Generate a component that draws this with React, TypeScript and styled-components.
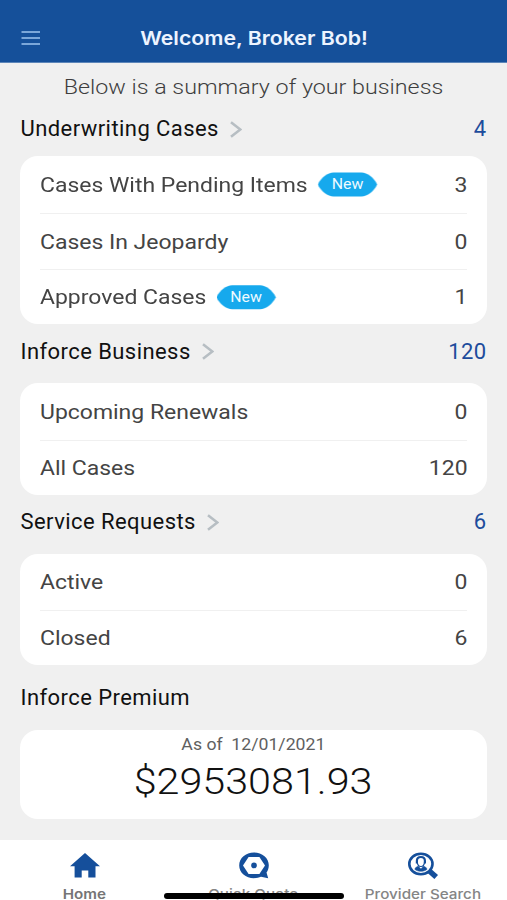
import React from "react";
import styled, { createGlobalStyle } from "styled-components";

const GlobalStyle = createGlobalStyle`
  *, *::before, *::after { box-sizing: border-box; }
  body { margin: 0; background: #f0f0f0; font-family: Roboto, sans-serif; }
`;

const Screen = styled.div`
  display: flex;
  flex-direction: column;
  width: 507px;
  height: 900px;
  overflow: hidden;
  background: #f0f0f0;
`;

const Header = styled.header`
  display: grid;
  grid-template-columns: 70px 1fr 70px;
  align-items: center;
  flex: none;
  height: 63px;
  padding-top: 14px;
  background: #15509a;
  border-bottom: 1px solid #5d86b9;
`;

const MenuButton = styled.button`
  display: flex;
  margin: 0 0 0 21px;
  padding: 0;
  width: 20px;
  border: 0;
  background: none;
`;

const Title = styled.h1`
  margin: 2px 0 0 1px;
  font: 600 19px/24px Inter, sans-serif;
  color: #edf4ff;
  text-align: center;
  white-space: nowrap;
  transform: scaleX(1.12);
`;

const Subtitle = styled.p`
  flex: none;
  height: 35px;
  margin: 0;
  padding-top: 13px;
  font-size: 20.5px;
  font-weight: 300;
  line-height: 22px;
  text-align: center;
  color: #3e3e3e;
  transform: scaleX(1.135);
`;

const SectionHead = styled.div<{ $height: number; $top?: number; $bottom?: number }>`
  display: flex;
  align-items: center;
  flex: none;
  height: ${(p) => p.$height}px;
  margin: 0 20.5px;
  padding-top: ${(p) => p.$top ?? 0}px;
  padding-bottom: ${(p) => p.$bottom ?? 0}px;
`;

const SectionTitle = styled.h2`
  margin: 0 11px 0 0;
  font-size: 22px;
  font-weight: 450;
  line-height: 26px;
  letter-spacing: 0.43px;
  color: #111;
`;

const SectionCount = styled.span`
  margin-left: auto;
  font-size: 22px;
  font-weight: 450;
  line-height: 26px;
  letter-spacing: 0.4px;
  color: #1d4c9c;
`;

const Card = styled.section`
  flex: none;
  margin: 0 20px;
  padding: 0 20px;
  border-radius: 18px;
  background: #fff;
`;

const Row = styled.div`
  display: flex;
  align-items: center;
  justify-content: space-between;
  height: 56.5px;
  padding-top: 0.5px;
  font-size: 20.5px;
  font-weight: 400;
  color: #444;

  &:last-child { height: 55px; }
  & + & { border-top: 1px solid #f0f0f0; }
`;

const RowLabel = styled.div`
  display: flex;
  align-items: center;
  gap: 9px;
  transform: scaleX(1.12);
  transform-origin: left center;
  white-space: nowrap;
`;

const RowValue = styled.span`
  margin-right: -0.5px;
  transform: scaleX(1.12);
  transform-origin: right center;
`;

const Badge = styled.span`
  width: 53px;
  height: 25px;
  background: #16a9ed;
  clip-path: path("M0 12.5C2.500 6 9 0.500 14 0.500H39C44 0.500 50.500 6 53 12.500C50.500 19 44 24.500 39 24.500H14C9 24.500 2.500 19 0 12.500Z");
  color: #eefaff;
  font-size: 14.2px;
  font-weight: 400;
  line-height: 25px;
  text-align: center;
`;

const PremiumCard = styled(Card)`
  display: flex;
  flex-direction: column;
  align-items: center;
  height: 89px;
  padding-top: 4.5px;
`;

const AsOf = styled.span`
  font-size: 16.3px;
  line-height: 20px;
  white-space: pre;
  color: #606060;
  transform: scaleX(1.085);
`;

const Amount = styled.strong`
  font-size: 37px;
  font-weight: 300;
  line-height: 44px;
  margin-top: 5px;
  color: #111;
  transform: scaleX(1.115);
`;

const TabBar = styled.nav`
  position: relative;
  display: grid;
  grid-template-columns: repeat(3, 1fr);
  flex: none;
  height: 60px;
  margin-top: auto;
  background: #fff;
`;

const Tab = styled.a`
  display: flex;
  flex-direction: column;
  align-items: center;
  padding-top: 12px;

  svg { flex: none; }
`;

const TabLabel = styled.span<{ $active?: boolean }>`
  margin-top: 9px;
  font: ${(p) => (p.$active ? 600 : 500)} 13.6px/12px Inter, sans-serif;
  color: ${(p) => (p.$active ? "#757575" : "#858585")};
  white-space: nowrap;
  transform: scaleX(1.12);
`;

const HomeIndicator = styled.div`
  position: absolute;
  left: 164px;
  bottom: 1.500px;
  width: 180px;
  height: 5.500px;
  border-radius: 3px;
  background: #000;
`;

const Chevron = () => (
  <svg width="12" height="17" viewBox="0 0 12 17" fill="none" stroke="#b7bec3" strokeWidth="2.600">
    <path d="M1 1.300L10.300 8.500L1 15.700" />
  </svg>
);

const HomeIcon = () => (
  <svg width="30" height="27" viewBox="0 0 30 27" fill="#154f9b">
    <path d="M15 1L30 14.200H25.500V25.500H18.300V18.500H11.700V25.500H4.600V14.200H0Z" />
  </svg>
);

const QuoteIcon = () => (
  <svg width="30" height="27" viewBox="0 0 30 27">
    <path
      fill="#154f9b"
      fillRule="evenodd"
      d="M15 .5C23.300 .5 29.800 6.100 29.800 13.300C29.800 16.400 28.700 18.900 27.500 20.600L29.200 26.200L22 24.800C20 25.700 17.700 26.200 15 26.200C6.700 26.200 .2 20.500 .2 13.400C.2 6.100 6.700 .5 15 .5ZM9.600 4.900L4 13.400L9.600 21.900H20.400L26 13.400L20.400 4.900Z"
    />
    <circle cx="15" cy="13.400" r="2.800" fill="#154f9b" />
  </svg>
);

const ProviderIcon = () => (
  <svg width="30" height="27" viewBox="0 0 30 27" fill="none" stroke="#154f9b">
    <ellipse cx="12.900" cy="12" rx="11.600" ry="10.200" strokeWidth="2.600" />
    <path d="M21.400 19L28.200 25" strokeWidth="5.400" />
    <path d="M8.900 11.500V8.700C8.900 6 10.500 5 12.900 5S16.900 6 16.900 8.700V11.500" strokeWidth="2.200" />
    <path d="M9.200 9.800C9.400 13 11 14.500 12.900 14.500S16.400 13 16.600 9.800" strokeWidth="1.200" />
    <path d="M6.800 17.300C7.300 15.200 9 14.500 10.400 14.200L12.900 17L15.400 14.200C16.800 14.500 18.500 15.200 19 17.300C15.800 20 10 20 6.800 17.300Z" fill="#154f9b" strokeWidth=".5" />
  </svg>
);

type Item = { label: string; value: number; isNew?: boolean };
type Section = { title: string; count: number; height: number; top?: number; bottom?: number; items: Item[] };

const sections: Section[] = [
  {
    title: "Underwriting Cases",
    count: 4,
    height: 58,
    top: 4,
    items: [
      { label: "Cases With Pending Items", value: 3, isNew: true },
      { label: "Cases In Jeopardy", value: 0 },
      { label: "Approved Cases", value: 1, isNew: true },
    ],
  },
  {
    title: "Inforce Business",
    count: 120,
    height: 59,
    bottom: 4,
    items: [
      { label: "Upcoming Renewals", value: 0 },
      { label: "All Cases", value: 120 },
    ],
  },
  {
    title: "Service Requests",
    count: 6,
    height: 59,
    bottom: 4,
    items: [
      { label: "Active", value: 0 },
      { label: "Closed", value: 6 },
    ],
  },
];

export default function App() {
  return (
    <Screen>
      <GlobalStyle />
      <Header>
        <MenuButton aria-label="Menu">
          <svg width="20" height="16" viewBox="0 0 20 16" stroke="#9dc3ee" strokeWidth="1.400">
            <path d="M.5 2H19M.5 8H19M.5 14H19" />
          </svg>
        </MenuButton>
        <Title>Welcome, Broker Bob!</Title>
      </Header>
      <Subtitle>Below is a summary of your business</Subtitle>
      {sections.map((s) => (
        <React.Fragment key={s.title}>
          <SectionHead $height={s.height} $top={s.top} $bottom={s.bottom}>
            <SectionTitle>{s.title}</SectionTitle>
            <Chevron />
            <SectionCount>{s.count}</SectionCount>
          </SectionHead>
          <Card>
            {s.items.map((i) => (
              <Row key={i.label}>
                <RowLabel>
                  {i.label}
                  {i.isNew && <Badge>New</Badge>}
                </RowLabel>
                <RowValue>{i.value}</RowValue>
              </Row>
            ))}
          </Card>
        </React.Fragment>
      ))}
      <SectionHead $height={65} $top={1}>
        <SectionTitle>Inforce Premium</SectionTitle>
      </SectionHead>
      <PremiumCard>
        <AsOf>{"As of  12/01/2021"}</AsOf>
        <Amount>$2953081.93</Amount>
      </PremiumCard>
      <TabBar>
        <Tab>
          <HomeIcon />
          <TabLabel $active>Home</TabLabel>
        </Tab>
        <Tab>
          <QuoteIcon />
          <TabLabel>Quick Quote</TabLabel>
        </Tab>
        <Tab>
          <ProviderIcon />
          <TabLabel>Provider Search</TabLabel>
        </Tab>
        <HomeIndicator />
      </TabBar>
    </Screen>
  );
}
